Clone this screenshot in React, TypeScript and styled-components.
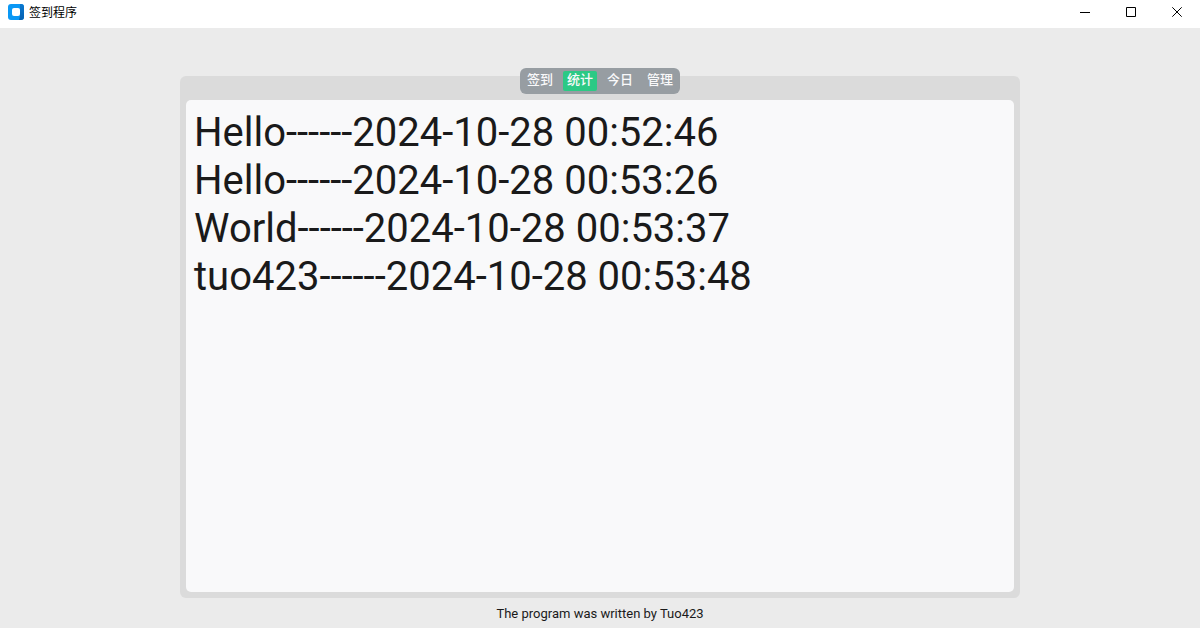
import React, { useState } from "react";
import styled, { createGlobalStyle } from "styled-components";

const GlobalStyle = createGlobalStyle`
  *, *::before, *::after { box-sizing: border-box; }
  body {
    margin: 0;
    background: #ebebeb;
    color: #1a1a1a;
    font-family: Roboto, "Noto Sans CJK SC", sans-serif;
  }
`;

const Window = styled.div`
  display: flex;
  flex-direction: column;
  min-height: 100vh;
`;

const TitleBar = styled.header`
  display: flex;
  align-items: center;
  height: 28px;
  padding-left: 8px;
  background: #ffffff;
`;

const AppIcon = styled.svg`
  width: 16px;
  height: 16px;
  margin: 0 5px 4px 0;
`;

const Title = styled.h1`
  flex: 1;
  margin: 0 0 4px;
  color: #000000;
  font: 400 12px/16px "Noto Sans CJK SC", sans-serif;
`;

const WindowButton = styled.button`
  display: flex;
  align-items: center;
  justify-content: center;
  width: 46px;
  height: 28px;
  padding: 0 0 4px;
  border: 0;
  background: transparent;
  color: #000000;
`;

const Main = styled.main`
  display: flex;
  flex: 1;
  flex-direction: column;
  width: 70%;
  margin: 0 auto;
  padding-top: 48px;
`;

const Panel = styled.section`
  display: flex;
  flex: 1;
  flex-direction: column;
  align-items: center;
  gap: 6px;
  padding: 0 6px 6px;
  border-radius: 6px;
  background: #dbdbdb;
`;

const TabBar = styled.div`
  display: grid;
  grid-template-columns: repeat(4, 1fr);
  width: 160px;
  height: 26px;
  margin-top: -8px;
  border-radius: 6px;
  background: #979da2;
`;

const Tab = styled.button<{ $active: boolean }>`
  margin: 3px;
  padding: 0 0 4px;
  border: 0;
  border-radius: 2px;
  background: ${({ $active }) => ($active ? "#2cc985" : "transparent")};
  color: #f9f9fa;
  font: 500 13px/16px "Noto Sans CJK SC", sans-serif;
  white-space: nowrap;
`;

const Log = styled.textarea`
  flex: 1;
  width: 100%;
  padding: 9px 8px 8px;
  border: 0;
  border-radius: 5px;
  outline: 0;
  resize: none;
  background: #f9f9fa;
  color: #1a1a1a;
  font: 400 40px/48px Roboto, sans-serif;
`;

const Footer = styled.footer`
  padding: 8px 0 7px;
  font-size: 13px;
  line-height: 15px;
  text-align: center;
`;

const tabs = ["签到", "统计", "今日", "管理"];

const records = [
  "Hello------2024-10-28 00:52:46",
  "Hello------2024-10-28 00:53:26",
  "World------2024-10-28 00:53:37",
  "tuo423------2024-10-28 00:53:48",
];

const windowControls = [
  { label: "最小化", path: "M0 5.5H10" },
  { label: "最大化", path: "M0.5 0.5H9.5V9.5H0.5Z" },
  { label: "关闭", path: "M0.3 0.3L9.7 9.7M9.7 0.3L0.3 9.7" },
];

export default function App() {
  const [active, setActive] = useState("统计");

  return (
    <>
      <GlobalStyle />
      <Window>
        <TitleBar>
          <AppIcon viewBox="0 0 16 16" aria-hidden="true">
            <defs>
              <linearGradient id="icon-side" x1="0" y1="0" x2="0" y2="1">
                <stop offset="0" stopColor="#0a78d0" />
                <stop offset="1" stopColor="#0560b0" />
              </linearGradient>
            </defs>
            <rect width="16" height="16" rx="3" fill="#0a98f5" />
            <path d="M12 0H13A3 3 0 0 1 16 3V13A3 3 0 0 1 13 16H11L12 12Z" fill="url(#icon-side)" />
            <rect x="4" y="4" width="8" height="8" rx="2" fill="#ffffff" />
          </AppIcon>
          <Title>签到程序</Title>
          {windowControls.map(({ label, path }) => (
            <WindowButton key={label} type="button" aria-label={label}>
              <svg width="10" height="10" viewBox="0 0 10 10" fill="none" stroke="currentColor">
                <path d={path} />
              </svg>
            </WindowButton>
          ))}
        </TitleBar>
        <Main>
          <Panel>
            <TabBar role="tablist">
              {tabs.map((name) => (
                <Tab
                  key={name}
                  type="button"
                  role="tab"
                  aria-selected={name === active}
                  $active={name === active}
                  onClick={() => setActive(name)}
                >
                  {name}
                </Tab>
              ))}
            </TabBar>
            <Log readOnly aria-label="签到记录" value={records.join("\n")} />
          </Panel>
        </Main>
        <Footer>The program was written by Tuo423</Footer>
      </Window>
    </>
  );
}
